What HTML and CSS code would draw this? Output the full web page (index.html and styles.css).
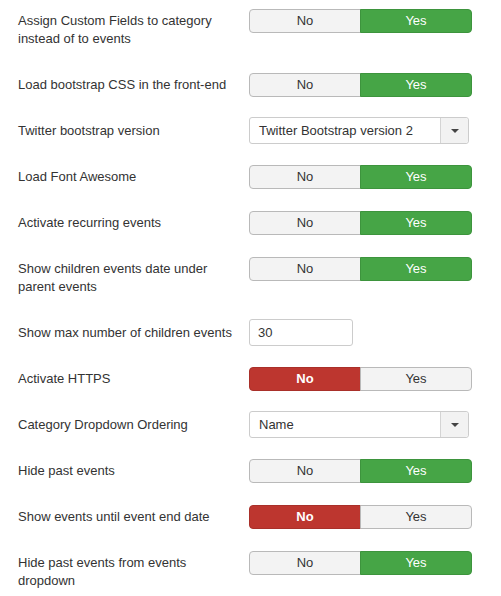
FILE: index.html
```html
<!DOCTYPE html>
<html>
<head>
<meta charset="utf-8">
<link rel="stylesheet" href="styles.css">
</head>
<body>
<div class="form">
  <div class="row">
    <div class="label">Assign Custom Fields to category instead of to events</div>
    <div class="control"><div class="toggle"><span class="btn">No</span><span class="btn yes">Yes</span></div></div>
  </div>
  <div class="row">
    <div class="label">Load bootstrap CSS in the front-end</div>
    <div class="control"><div class="toggle"><span class="btn">No</span><span class="btn yes">Yes</span></div></div>
  </div>
  <div class="row">
    <div class="label">Twitter bootstrap version</div>
    <div class="control"><div class="select"><span class="select-text">Twitter Bootstrap version 2</span><span class="select-arrow"><span class="caret"></span></span></div></div>
  </div>
  <div class="row">
    <div class="label">Load Font Awesome</div>
    <div class="control"><div class="toggle"><span class="btn">No</span><span class="btn yes">Yes</span></div></div>
  </div>
  <div class="row">
    <div class="label">Activate recurring events</div>
    <div class="control"><div class="toggle"><span class="btn">No</span><span class="btn yes">Yes</span></div></div>
  </div>
  <div class="row">
    <div class="label">Show children events date under parent events</div>
    <div class="control"><div class="toggle"><span class="btn">No</span><span class="btn yes">Yes</span></div></div>
  </div>
  <div class="row">
    <div class="label">Show max number of children events</div>
    <div class="control"><div class="input">30</div></div>
  </div>
  <div class="row">
    <div class="label">Activate HTTPS</div>
    <div class="control"><div class="toggle"><span class="btn no">No</span><span class="btn">Yes</span></div></div>
  </div>
  <div class="row">
    <div class="label">Category Dropdown Ordering</div>
    <div class="control"><div class="select"><span class="select-text">Name</span><span class="select-arrow"><span class="caret"></span></span></div></div>
  </div>
  <div class="row">
    <div class="label">Hide past events</div>
    <div class="control"><div class="toggle"><span class="btn">No</span><span class="btn yes">Yes</span></div></div>
  </div>
  <div class="row">
    <div class="label">Show events until event end date</div>
    <div class="control"><div class="toggle"><span class="btn no">No</span><span class="btn">Yes</span></div></div>
  </div>
  <div class="row">
    <div class="label">Hide past events from events dropdown</div>
    <div class="control"><div class="toggle"><span class="btn">No</span><span class="btn yes">Yes</span></div></div>
  </div>
</div>
</body>
</html>
```
FILE: styles.css
```css
html, body {
  margin: 0;
  padding: 0;
  background: #fff;
}
body {
  font-family: "Liberation Sans", Arial, sans-serif;
  font-size: 13px;
  color: #333;
}
.form {
  padding: 9px 0 0 18px;
}
.row {
  display: flex;
  align-items: flex-start;
  margin-bottom: 22px;
}
.label {
  width: 220px;
  margin-right: 11px;
  padding: 3px 0;
  line-height: 18px;
}
.control {
  display: flex;
  align-items: flex-start;
  height: 24px;
}
.toggle {
  display: flex;
  width: 223px;
  height: 24px;
}
.btn {
  box-sizing: border-box;
  width: 112px;
  height: 24px;
  line-height: 22px;
  text-align: center;
  background: #f3f3f3;
  border: 1px solid #b9b9b9;
  color: #333;
}
.btn:first-child {
  border-radius: 4px 0 0 4px;
}
.btn + .btn {
  margin-left: -1px;
  border-radius: 0 4px 4px 0;
}
.btn.yes {
  background: #46a546;
  border-color: #3d943d;
  color: #fff;
}
.btn.no {
  background: #bd362f;
  border-color: #a9302a;
  color: #fff;
  font-weight: bold;
}
.select {
  box-sizing: border-box;
  display: flex;
  width: 220px;
  height: 27px;
  margin-top: -2px;
  border: 1px solid #cccccc;
  border-radius: 3px;
  background: #fff;
  flex-shrink: 0;
}
.select-text {
  flex: 1;
  padding-left: 9px;
  line-height: 25px;
}
.select-arrow {
  width: 27px;
  border-left: 1px solid #d4d4d4;
  background: #f2f2f2;
  border-radius: 0 3px 3px 0;
  display: flex;
  align-items: center;
  justify-content: center;
}
.caret {
  width: 0;
  height: 0;
  border-left: 4px solid transparent;
  border-right: 4px solid transparent;
  border-top: 4px solid #444;
}
.input {
  box-sizing: border-box;
  width: 104px;
  height: 27px;
  margin-top: -2px;
  border: 1px solid #cccccc;
  border-radius: 3px;
  padding-left: 8px;
  line-height: 25px;
  flex-shrink: 0;
}
```
